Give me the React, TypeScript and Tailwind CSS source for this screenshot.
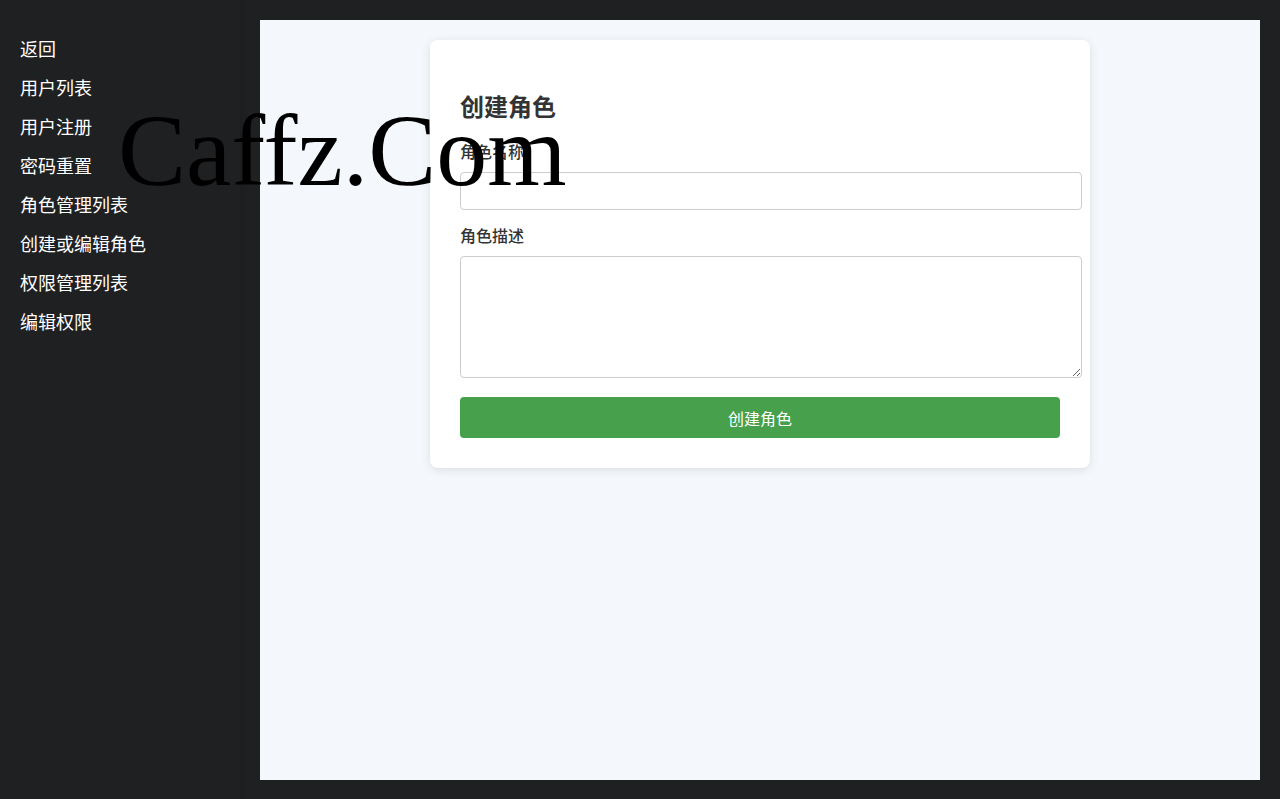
import { useState } from "react";

const menu = [
  "返回",
  "用户列表",
  "用户注册",
  "密码重置",
  "角色管理列表",
  "创建或编辑角色",
  "权限管理列表",
  "编辑权限",
];

function Sidebar() {
  return (
    <nav className="w-60 shrink-0 px-5 pt-9 shadow-[2px_0_5px_rgba(0,0,0,0.1)]">
      <ul className="flex flex-col gap-[15px]">
        {menu.map((item) => (
          <li key={item}>
            <a href="#" className="block text-lg leading-6 text-white hover:underline">{item}</a>
          </li>
        ))}
      </ul>
    </nav>
  );
}

function RoleForm() {
  const [name, setName] = useState("");
  const [desc, setDesc] = useState("");

  return (
    <form
      className="mx-auto max-w-[660px] rounded-lg bg-white p-[30px] text-[#333] shadow-[0_2px_10px_rgba(0,0,0,0.1)]"
      onSubmit={(e) => e.preventDefault()}
    >
      <h2 className="my-5 text-2xl leading-8 font-bold">创建角色</h2>
      <div className="-mr-[22px] mb-4">
        <label htmlFor="name" className="mb-3 block text-base leading-[18px] font-medium">角色名称</label>
        <input
          id="name"
          type="text"
          className="block h-[38px] w-full rounded border border-[#ccc] bg-white px-[10px] text-base"
          value={name}
          onChange={(e) => setName(e.target.value)}
        />
      </div>
      <div className="-mr-[22px] mb-[19px]">
        <label htmlFor="desc" className="mb-3 block text-base leading-[18px] font-medium">角色描述</label>
        <textarea
          id="desc"
          className="block h-[122px] w-full resize rounded border border-[#ccc] bg-white p-[10px] text-base"
          value={desc}
          onChange={(e) => setDesc(e.target.value)}
        />
      </div>
      <button type="submit" className="block h-[41px] w-full cursor-pointer rounded bg-[#47a04b] text-base text-white">
        创建角色
      </button>
    </form>
  );
}

export default function App() {
  return (
    <div className="relative flex min-h-screen bg-[#1f2022] font-['Noto_Sans_CJK_SC',sans-serif]">
      <Sidebar />
      <div className="flex min-w-0 flex-1 p-5 pb-[19px]">
        <main className="flex-1 bg-[#f4f7fc] p-5">
          <RoleForm />
        </main>
      </div>
      {/* Watermark */}
      <div className="pointer-events-none absolute top-[101px] left-[118px] font-['Liberation_Serif',serif] text-[102px] leading-[100px] text-black">
        Caffz.Com
      </div>
    </div>
  );
}
